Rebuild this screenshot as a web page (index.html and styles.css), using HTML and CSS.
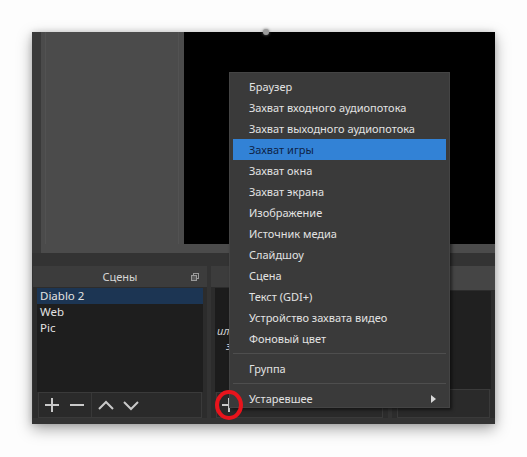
FILE: index.html
```html
<!DOCTYPE html>
<html lang="ru">
<head>
<meta charset="utf-8">
<title>OBS</title>
<link rel="stylesheet" href="styles.css">
</head>
<body>
<div class="window">
  <div class="top">
    <div class="side-strip"></div>
    <div class="preview">
      <div class="preview-left"></div>
      <div class="canvas"><span class="handle"></span></div>
    </div>
  </div>
  <div class="docks">
    <section class="dock scenes">
      <header class="dock-title"><span>Сцены</span>
        <svg class="float-icon" width="8" height="8" viewBox="0 0 8 8"><rect x="2.5" y="0.5" width="5" height="5" fill="none" stroke="#9a9a9a"/><rect x="0.5" y="2.5" width="5" height="5" fill="#5a5a5a" stroke="#9a9a9a"/></svg>
      </header>
      <div class="dock-body">
        <ul class="list">
          <li class="selected">Diablo 2</li>
          <li>Web</li>
          <li>Pic</li>
        </ul>
        <div class="toolbar">
          <div class="tb-group">
            <svg class="tb-icon" width="16" height="16" viewBox="0 0 16 16"><path d="M8 1V15M1 8H15" stroke="#c9c9c9" stroke-width="2"/></svg>
            <svg class="tb-icon" width="16" height="16" viewBox="0 0 16 16"><path d="M1 8H15" stroke="#c9c9c9" stroke-width="2"/></svg>
          </div>
          <div class="tb-group">
            <svg class="tb-icon" width="16" height="16" viewBox="0 0 16 16"><path d="M1 12L8 5L15 12" fill="none" stroke="#c9c9c9" stroke-width="2"/></svg>
            <svg class="tb-icon" width="16" height="16" viewBox="0 0 16 16"><path d="M1 5L8 12L15 5" fill="none" stroke="#c9c9c9" stroke-width="2"/></svg>
          </div>
        </div>
      </div>
    </section>
    <section class="dock sources">
      <header class="dock-title"></header>
      <div class="dock-body">
        <div class="list sources-list">
          <p class="hint">или щёлкните<br><span class="hint-2">здесь</span></p>
        </div>
        <div class="toolbar">
          <svg class="tb-icon add" width="16" height="16" viewBox="0 0 16 16"><path d="M8 1V15M1 8H15" stroke="#c9c9c9" stroke-width="2"/></svg>
        </div>
      </div>
    </section>
    <section class="dock mixer">
      <header class="dock-title"></header>
      <div class="dock-body">
        <div class="list"></div>
        <div class="toolbar"></div>
      </div>
    </section>
  </div>

  <div class="menu">
    <div class="item">Браузер</div>
    <div class="item">Захват входного аудиопотока</div>
    <div class="item">Захват выходного аудиопотока</div>
    <div class="item active">Захват игры</div>
    <div class="item">Захват окна</div>
    <div class="item">Захват экрана</div>
    <div class="item">Изображение</div>
    <div class="item">Источник медиа</div>
    <div class="item">Слайдшоу</div>
    <div class="item">Сцена</div>
    <div class="item">Текст (GDI+)</div>
    <div class="item">Устройство захвата видео</div>
    <div class="item">Фоновый цвет</div>
    <div class="sep"></div>
    <div class="item">Группа</div>
    <div class="sep"></div>
    <div class="item submenu">Устаревшее
      <svg class="arrow" width="5" height="8" viewBox="0 0 5 8"><path d="M0 0L5 4L0 8Z" fill="#d8d8d8"/></svg>
    </div>
  </div>

  <div class="annotation"></div>
</div>
</body>
</html>
```

FILE: styles.css
```css
html, body {
  margin: 0;
  padding: 0;
}
body {
  background: #fdfdfd;
  width: 527px;
  height: 457px;
  overflow: hidden;
  font-family: "Noto Sans", "Open Sans", sans-serif;
  font-size: 11px;
  color: #dcdcdc;
}
.window {
  position: relative;
  margin: 32px 0 0 32px;
  width: 463px;
  height: 392px;
  background: #333333;
  box-shadow: 0 5px 14px rgba(0, 0, 0, 0.35), 0 0 6px rgba(0, 0, 0, 0.15);
  display: flex;
  flex-direction: column;
}
.top {
  height: 221px;
  display: flex;
  flex-shrink: 0;
}
.side-strip {
  width: 9px;
  background: #393939;
}
.preview {
  flex: 1;
  display: flex;
  background: #4b4b4b;
  padding-bottom: 9px;
}
.preview-left {
  width: 132px;
  margin-left: 4px;
  margin-right: 5px;
  border-left: 1px solid #525252;
  border-right: 1px solid #525252;
}
.canvas {
  flex: 1;
  background: #000;
  position: relative;
}
.handle {
  position: absolute;
  left: 79px;
  top: -3px;
  width: 6px;
  height: 6px;
  border-radius: 50%;
  background: #9c9c9c;
  box-shadow: 0 0 3px #777;
}
.docks {
  flex: 1;
  display: flex;
  gap: 4px;
  padding: 13px 0 6px 1px;
  background: #333333;
}
.dock {
  display: flex;
  flex-direction: column;
}
.scenes { width: 174px; }
.sources { width: 177px; }
.mixer { flex: 1; }
.dock-title {
  height: 21px;
  flex-shrink: 0;
  background: #3c3c3c;
  display: flex;
  align-items: center;
  justify-content: center;
  position: relative;
  font-size: 11px;
  color: #d6d6d6;
}
.mixer .dock-title { background: #454545; height: 24px; }
.float-icon {
  position: absolute;
  right: 8px;
  top: 7px;
}
.dock-body {
  flex: 1;
  display: flex;
  flex-direction: column;
  background: #2c2c2c;
  padding: 1px 4px 0;
}
.list {
  margin: 0;
  padding: 0;
  list-style: none;
  height: 104px;
  background: #1e1e1e;
}
.list li {
  height: 16px;
  line-height: 16px;
  padding-left: 3px;
  font-size: 11.5px;
  color: #e2e2e2;
}
.list li.selected {
  background: #1c3553;
}
.toolbar {
  flex: 1;
  display: flex;
  align-items: center;
  background: #2a2a2a;
  border: 1px solid #3a3a3a;
  margin: 0 1px;
}
.tb-group {
  display: flex;
  gap: 9px;
  align-items: center;
  padding: 0 6px 0 5px;
  height: 100%;
}
.tb-group + .tb-group {
  border-left: 1px solid #383838;
  padding-left: 6px;
}
.tb-icon { display: block; }
.add { margin-left: 4px; }
.sources-list {
  background: #1c1c1c;
  overflow: hidden;
}
.hint {
  margin: 35px 0 0 2px;
  width: 12px;
  overflow: hidden;
  white-space: nowrap;
  font-style: italic;
  font-size: 11px;
  line-height: 15px;
  color: #d0d0d0;
}
.hint-2 { padding-left: 9px; }
.mixer .list { background: #202020; height: 98px; }

.menu {
  position: absolute;
  left: 197px;
  top: 40px;
  width: 221px;
  height: 336px;
  box-sizing: border-box;
  padding: 3px 3px 0;
  background: #3a3a3a;
  border: 1px solid #444;
  box-shadow: 2px 2px 3px rgba(0, 0, 0, 0.5);
  color: #e2e2e2;
  font-size: 11px;
}
.item {
  height: 21px;
  line-height: 21px;
  padding-left: 16px;
  white-space: nowrap;
  position: relative;
}
.item.active {
  background: #3282d6;
  color: #0e2346;
}
.sep {
  height: 9px;
  display: flex;
  align-items: center;
}
.sep::before {
  content: "";
  flex: 1;
  height: 1px;
  background: #4e4e4e;
}
.arrow {
  position: absolute;
  right: 10px;
  top: 7px;
}
.annotation {
  position: absolute;
  left: 183px;
  top: 358px;
  width: 20px;
  height: 22px;
  border: 4px solid #e8141c;
  border-radius: 50%;
}
```
